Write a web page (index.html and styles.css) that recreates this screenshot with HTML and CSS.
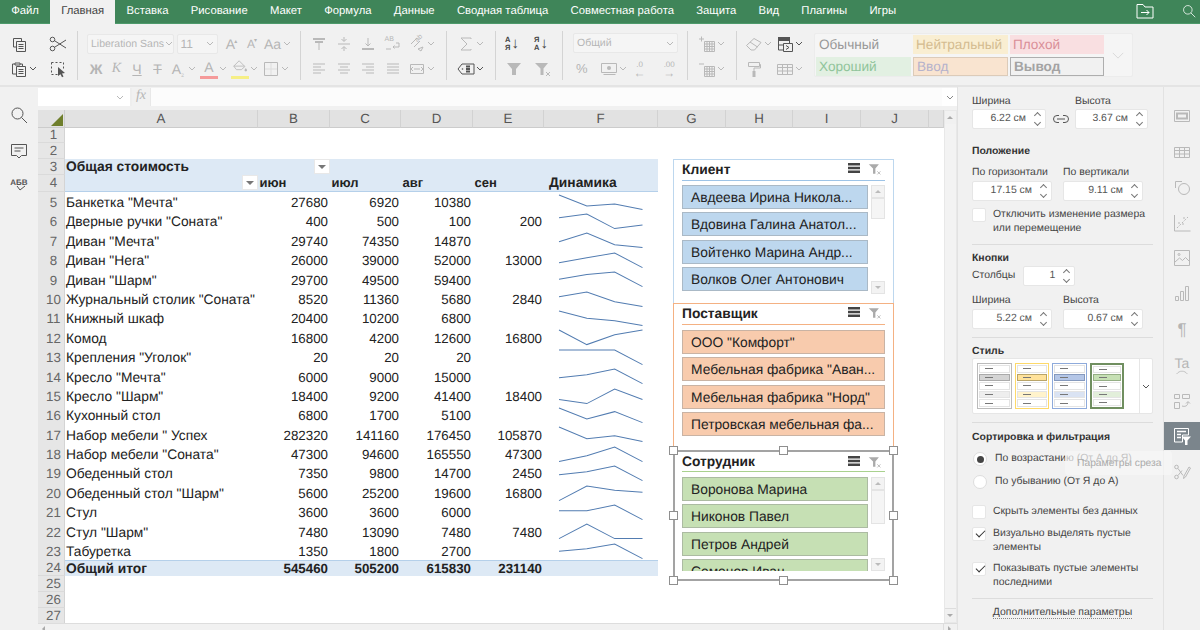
FILE: index.html
```html
<!DOCTYPE html>
<html lang="ru">

<head>
    <meta charset="UTF-8">
    <title>Таблица</title>
    <link rel="stylesheet" href="styles.css">
</head>

<body>
    <svg class="sprite" xmlns="http://www.w3.org/2000/svg">
        <symbol id="i-copy" viewBox="0 0 18 18"><path d="M6 12H3.500V3.500h8V6"/><path d="M6.500 6.500h9v10h-9z"/><path d="M8.500 9.500h5M8.500 11.500h5M8.500 13.500h5"/></symbol>
        <symbol id="i-paste" viewBox="0 0 18 18"><path d="M6 14H2.500V4H5M10 4h2.500v2"/><path d="M5 5V3h5v2z"/><path d="M6.500 6.500h9v10h-9z"/><path d="M8.500 9.500h5M8.500 11.500h5M8.500 13.500h5"/></symbol>
        <symbol id="i-cut" viewBox="0 0 18 18"><circle cx="3.500" cy="4.500" r="2.300"/><circle cx="3.500" cy="13.500" r="2.300"/><path d="M5.500 5.700 17 13M5.500 12.300 17 5"/></symbol>
        <symbol id="i-select" viewBox="0 0 18 18"><path stroke-dasharray="2 2" d="M2.500 2.500h12v8M2.500 2.500v12h6"/><path class="solid" d="M9 7l7 6-3 .5 1.500 3-1.500.8-1.500-3L9 16z"/></symbol>
        <symbol id="i-atop" viewBox="0 0 18 18"><path stroke-width="2" d="M3 4h12"/><path stroke-width="2" d="M5 7h8"/><path d="M9 7v8"/></symbol>
        <symbol id="i-amid" viewBox="0 0 18 18"><path d="M3 9h12"/><path d="M9 2v4M6.500 4 9 6.500 11.500 4M9 16v-4M6.500 14 9 11.500 11.500 14"/></symbol>
        <symbol id="i-abot" viewBox="0 0 18 18"><path stroke-width="2" d="M3 14h12"/><path d="M9 3v8M6.500 8.500 9 11l2.500-2.500"/></symbol>
        <symbol id="i-left" viewBox="0 0 18 18"><path d="M3 4h12M3 7h8M3 10h12M3 13h8"/></symbol>
        <symbol id="i-center" viewBox="0 0 18 18"><path d="M3 4h12M5 7h8M3 10h12M5 13h8"/></symbol>
        <symbol id="i-right" viewBox="0 0 18 18"><path d="M3 4h12M7 7h8M3 10h12M7 13h8"/></symbol>
        <symbol id="i-just" viewBox="0 0 18 18"><path d="M3 4h12M3 7h12M3 10h12M3 13h12"/></symbol>
        <symbol id="i-wrap" viewBox="0 0 18 18"><path d="M9 12h6V8h-3M10.500 10.500 9 12l1.500 1.500M2 14h5"/></symbol>
        <symbol id="i-angle" viewBox="0 0 18 18"><path d="M3 9l6-6M6 12l6-6M10 14l5-2-2 4z"/></symbol>
        <symbol id="i-merge" viewBox="0 0 18 18"><path d="M2.500 4.500h13v9h-13z"/><path d="M6 9h6M5 7l-2 2 2 2M13 7l2 2-2 2"/></symbol>
        <symbol id="i-sigma" viewBox="0 0 18 18"><path d="M14 4V3H4l6 6-6 6h10v-1"/></symbol>
        <symbol id="i-tag" viewBox="0 0 18 18"><path d="M5 4h12v10H5L1 9z"/><path stroke-width="2" d="M9 6.500h4M9 9h4M9 11.500h4"/><circle class="solid" cx="5.500" cy="9" r=".8"/></symbol>
        <symbol id="i-filter" viewBox="0 0 18 18"><path class="solid" d="M2 3h14l-5 6v6H7V9z"/></symbol>
        <symbol id="i-filterx" viewBox="0 0 18 18"><path class="solid" d="M1 3h13L9.500 8.500V15h-3V8.500z"/><path d="M12 12l4 4M16 12l-4 4"/></symbol>
        <symbol id="i-money" viewBox="0 0 18 18"><path d="M1.500 3.500h15v9h-15zM3.500 14.500h12"/><circle class="solid" cx="9" cy="8" r="2"/></symbol>
        <symbol id="i-insert" viewBox="0 0 18 18"><path d="M6.500 6.500h10v10h-10zM6.500 11.500h10M11.500 6.500v10M6.500 9h10M6.500 14h10M9 6.500v10M14 6.500v10"/><path d="M1 4h5M3.500 1.500v5"/></symbol>
        <symbol id="i-delete" viewBox="0 0 18 18"><path d="M6.500 6.500h10v10h-10zM6.500 11.500h10M11.500 6.500v10M6.500 9h10M6.500 14h10M9 6.500v10M14 6.500v10"/><path d="M1 4h5"/></symbol>
        <symbol id="i-eraser" viewBox="0 0 18 18"><path d="M1.500 10.500 9 3.500l7 4-6.500 7.500H6z"/><path d="M5 7l7.500 5"/></symbol>
        <symbol id="i-tablefmt" viewBox="0 0 18 18"><path class="solid" d="M2 2h12v4H2z"/><path d="M2.500 6v9H7M13.500 6v2M2.500 10H7"/><path d="M7.500 8.500h9v8h-9z"/><path d="M10 10.500l3 2-3 2"/></symbol>
        <symbol id="i-brush" viewBox="0 0 18 18"><path d="M3.500 2.500h11v4h-11z"/><path d="M14.500 4.500h1v3.500H9v3"/><path stroke-width="3" d="M9 11v6"/></symbol>
        <symbol id="i-table" viewBox="0 0 18 18"><path d="M1.500 4.500h15v10h-15zM1.500 7.500h15M1.500 11h15M6.500 4.500v10M11.500 4.500v10"/></symbol>
        <symbol id="i-border" viewBox="0 0 18 18"><path d="M2.500 2.500h13v13h-13z"/><path stroke="#ddd" d="M9 3v12M3 9h12"/></symbol>
        <symbol id="i-bucket" viewBox="0 0 18 18"><path d="M2 8l6-6 6.500 6.500-4 3.500H5z"/><path d="M2 8h12"/><path class="solid" d="M15.500 10l1.500 2.500a1.500 1.500 0 0 1-3 0z"/></symbol>
        <symbol id="i-search" viewBox="0 0 18 18"><circle cx="7.500" cy="7.500" r="5.500"/><path d="M11.500 11.500 17 17"/></symbol>
        <symbol id="i-folder" viewBox="0 0 18 18"><path d="M1 16V2.500h6L9 5h8v11z"/><path d="M5 10.500h8M10.500 8l2.500 2.500-2.500 2.500"/></symbol>
        <symbol id="i-comment" viewBox="0 0 18 18"><path d="M1.500 2.500h15v11h-5L9 16l-2.500-2.500h-5z"/><path d="M4.500 6h9M4.500 9h6"/></symbol>
        <symbol id="i-stack" viewBox="0 0 12 12"><path class="solid stack" d="M0 0h12v2.500H0zM0 3.800h12v2.500H0zM0 7.600h12v2.500H0z"/></symbol>
        <symbol id="i-link" viewBox="0 0 18 18"><path d="M7 5.500H5a3.500 3.500 0 0 0 0 7h2M11 5.500h2a3.500 3.500 0 0 1 0 7h-2M5 9h8"/></symbol>
        <symbol id="i-slide" viewBox="0 0 18 18"><path d="M1.500 3.500h15v11h-15z"/><path stroke-width="2" d="M4 6.500h10v5H4z"/></symbol>
        <symbol id="i-shapes" viewBox="0 0 18 18"><path d="M9 3.500H2.500V10"/><circle cx="11" cy="11" r="5.500"/></symbol>
        <symbol id="i-chart" viewBox="0 0 18 18"><path d="M1.500 1v16h16"/><path stroke-dasharray="2 1.500" d="M4 14 15 3"/><path d="M5 9h2M9 10h2M10 4h2"/></symbol>
        <symbol id="i-image" viewBox="0 0 18 18"><path d="M1.500 1.500h15v15h-15z"/><path d="M2 13l4.500-4 3 2.500 3-3 3.500 3.500"/><circle cx="6" cy="5.500" r="1"/></symbol>
        <symbol id="i-bars" viewBox="0 0 18 18"><path d="M2.500 11.500h3v4h-3zM7.500 6.500h3v9h-3zM12.500 1.500h3v14h-3z"/></symbol>
        <symbol id="i-arc" viewBox="0 0 18 6"><path d="M2 5c4-5 10-5 14 0"/></symbol>
        <symbol id="i-layout" viewBox="0 0 18 18"><path d="M1.500 2.500h5v4h-5zM9.500 2.500h7v4h-7zM1.500 10.500h5v6h-5z"/><path d="M9 14c3 1 6 0 6-4M13 11.500l2-2 2 2"/></symbol>
        <symbol id="i-slicer" viewBox="0 0 18 18"><path d="M1.500 1.500h14V8H9.500v7h-8z"/><path stroke-width="1.500" d="M4 4.500h9M4 7.500h4M4 10.500h4"/><path class="solid" d="M8.500 9.500h9.500l-3.500 4v4.500h-2.500v-4.500z"/></symbol>
        <symbol id="i-sign" viewBox="0 0 18 18"><circle cx="3.500" cy="4" r="1.800"/><circle cx="3.500" cy="14" r="1.800"/><path d="M5 5.500l5 7M5 12.500l4-5M11 13l5-9 1.500 1-5 9-2 1.500z"/></symbol>
    </svg>

    <div class="app">
        <nav class="tabs">
            <span class="tab">Файл</span>
            <span class="tab active">Главная</span>
            <span class="tab">Вставка</span>
            <span class="tab">Рисование</span>
            <span class="tab">Макет</span>
            <span class="tab">Формула</span>
            <span class="tab">Данные</span>
            <span class="tab">Сводная таблица</span>
            <span class="tab">Совместная работа</span>
            <span class="tab">Защита</span>
            <span class="tab">Вид</span>
            <span class="tab">Плагины</span>
            <span class="tab">Игры</span>
            <span class="tab-icons">
                <svg class="ic"><use href="#i-folder" /></svg>
                <svg class="ic lens"><use href="#i-search" /></svg>
            </span>
        </nav>

        <div class="ribbon">
            <div class="group g-clip">
                <svg class="ic on"><use href="#i-copy" /></svg>
                <svg class="ic on"><use href="#i-cut" /></svg>
                <span class="tool"><svg class="ic on"><use href="#i-paste" /></svg><svg class="chev on"><path d="M1 1l3 3 3-3" /></svg></span>
                <svg class="ic on"><use href="#i-select" /></svg>
            </div>

            <div class="group g-font">
                <div class="tool-row">
                    <span class="combo combo-font">Liberation Sans<svg class="chev"><path d="M1 1l3 3 3-3" /></svg></span>
                    <span class="combo combo-size">11<svg class="chev"><path d="M1 1l3 3 3-3" /></svg></span>
                    <span class="glyph">A<sup>▴</sup></span>
                    <span class="glyph small">A<sup>▾</sup></span>
                    <span class="tool"><span class="glyph">Aa</span><svg class="chev"><path d="M1 1l3 3 3-3" /></svg></span>
                </div>
                <div class="tool-row">
                    <span class="glyph strong">Ж</span>
                    <span class="glyph serifi">К</span>
                    <span class="glyph under">Ч</span>
                    <span class="glyph strike">Т</span>
                    <span class="tool split"><span class="glyph">A<sub>₂</sub></span><svg class="chev"><path d="M1 1l3 3 3-3" /></svg></span>
                    <span class="tool split"><span class="glyph colored red">A</span><svg class="chev"><path d="M1 1l3 3 3-3" /></svg></span>
                    <span class="tool split"><span class="colored yellow"><svg class="ic"><use href="#i-bucket" /></svg></span><svg class="chev"><path d="M1 1l3 3 3-3" /></svg></span>
                    <span class="tool"><svg class="ic"><use href="#i-border" /></svg><svg class="chev"><path d="M1 1l3 3 3-3" /></svg></span>
                </div>
            </div>

            <div class="group g-align">
                <div class="tool-row">
                    <svg class="ic"><use href="#i-atop" /></svg>
                    <svg class="ic"><use href="#i-amid" /></svg>
                    <svg class="ic"><use href="#i-abot" /></svg>
                    <span class="stacked"><small>AB</small><svg class="ic"><use href="#i-wrap" /></svg></span>
                    <span class="tool"><span class="stacked"><small class="tilt">ab</small><svg class="ic"><use href="#i-angle" /></svg></span><svg class="chev"><path d="M1 1l3 3 3-3" /></svg></span>
                </div>
                <div class="tool-row">
                    <svg class="ic"><use href="#i-left" /></svg>
                    <svg class="ic"><use href="#i-center" /></svg>
                    <svg class="ic"><use href="#i-right" /></svg>
                    <svg class="ic"><use href="#i-just" /></svg>
                    <span class="tool"><svg class="ic"><use href="#i-merge" /></svg><svg class="chev"><path d="M1 1l3 3 3-3" /></svg></span>
                </div>
            </div>

            <div class="group g-sum">
                <span class="tool"><svg class="ic"><use href="#i-sigma" /></svg><svg class="chev"><path d="M1 1l3 3 3-3" /></svg></span>
                <span class="tool"><svg class="ic on"><use href="#i-tag" /></svg><svg class="chev on"><path d="M1 1l3 3 3-3" /></svg></span>
            </div>

            <div class="group g-sort">
                <span class="sort"><b>А<br>Я</b><i>↓</i></span>
                <span class="sort"><b>Я<br>А</b><i>↓</i></span>
                <svg class="ic"><use href="#i-filter" /></svg>
                <svg class="ic"><use href="#i-filterx" /></svg>
            </div>

            <div class="group g-num">
                <span class="combo combo-num">Общий<svg class="chev"><path d="M1 1l3 3 3-3" /></svg></span>
                <div class="tool-row">
                    <span class="glyph percent">%</span>
                    <span class="tool"><svg class="ic"><use href="#i-money" /></svg><svg class="chev"><path d="M1 1l3 3 3-3" /></svg></span>
                    <span class="decimals"><small>.0</small><i>←</i></span>
                    <span class="decimals"><small>.00</small><i>→</i></span>
                </div>
            </div>

            <div class="group g-cells">
                <span class="tool"><svg class="ic"><use href="#i-insert" /></svg><svg class="chev"><path d="M1 1l3 3 3-3" /></svg></span>
                <span class="tool"><svg class="ic"><use href="#i-delete" /></svg><svg class="chev"><path d="M1 1l3 3 3-3" /></svg></span>
            </div>

            <div class="group g-format">
                <span class="tool"><svg class="ic"><use href="#i-eraser" /></svg><svg class="chev"><path d="M1 1l3 3 3-3" /></svg></span>
                <span class="tool"><svg class="ic on"><use href="#i-tablefmt" /></svg><svg class="chev on"><path d="M1 1l3 3 3-3" /></svg></span>
                <svg class="ic"><use href="#i-brush" /></svg>
                <span class="tool"><svg class="ic"><use href="#i-table" /></svg><svg class="chev"><path d="M1 1l3 3 3-3" /></svg></span>
            </div>

            <div class="gallery">
                <div class="gallery-grid">
                    <span class="cs cs-normal">Обычный</span>
                    <span class="cs cs-neutral">Нейтральный</span>
                    <span class="cs cs-bad">Плохой</span>
                    <span class="cs cs-good">Хороший</span>
                    <span class="cs cs-input">Ввод</span>
                    <span class="cs cs-output">Вывод</span>
                </div>
                <div class="gallery-more"><svg class="chev big" viewBox="0 0 8 5"><path d="M1 1l3 3 3-3" /></svg></div>
            </div>
        </div>

        <div class="main">
            <aside class="sidebar">
                <svg class="ic on"><use href="#i-search" /></svg>
                <svg class="ic on"><use href="#i-comment" /></svg>
                <span class="spell">АБВ<svg viewBox="0 0 10 6"><path d="M1 1l3 4 5-4" /></svg></span>
            </aside>

            <section class="center">
                <div class="formula">
                    <div class="name-box"><svg class="chev"><path d="M1 1l3 3 3-3" /></svg></div>
                    <div class="fx">fx</div>
                    <div class="formula-input"></div>
                    <div class="formula-more"><svg class="chev"><path d="M1 1l3 3 3-3" /></svg></div>
                </div>

                <div class="sheet-wrap">
                    <div class="sheet">
                        <div class="row head">
                            <div class="corner"></div>
                            <div class="ch">A</div><div class="ch">B</div><div class="ch">C</div><div class="ch">D</div><div class="ch">E</div><div class="ch">F</div><div class="ch">G</div><div class="ch">H</div><div class="ch">I</div><div class="ch">J</div><div class="ch"></div>
                        </div>
                        <div class="row low"><div class="rh">1</div></div>
                        <div class="row low"><div class="rh">2</div></div>
                        <div class="row low band">
                            <div class="rh">3</div>
                            <div class="c b">Общая стоимость</div>
                            <div class="c end"><span class="fbtn"></span></div>
                            <div class="c"></div><div class="c"></div><div class="c"></div><div class="c"></div>
                        </div>
                        <div class="row sub band">
                            <div class="rh">4</div>
                            <div class="c end"><span class="fbtn"></span></div>
                            <div class="c b m">июн</div><div class="c b m">июл</div><div class="c b m">авг</div><div class="c b m">сен</div><div class="c b dyn">Динамика</div>
                        </div>
                        <div class="row"><div class="rh">5</div><div class="c">Банкетка "Мечта"</div><div class="c n">27680</div><div class="c n">6920</div><div class="c n">10380</div><div class="c n"></div><div class="c"><svg class="spark" viewBox="0 0 3 1" preserveAspectRatio="none"><polyline points="0,0 1,.75 2,.625 3,1" /></svg></div></div>
                        <div class="row"><div class="rh">6</div><div class="c">Дверные ручки "Соната"</div><div class="c n">400</div><div class="c n">500</div><div class="c n">100</div><div class="c n">200</div><div class="c"><svg class="spark" viewBox="0 0 3 1" preserveAspectRatio="none"><polyline points="0,.25 1,0 2,1 3,.75" /></svg></div></div>
                        <div class="row"><div class="rh">7</div><div class="c">Диван "Мечта"</div><div class="c n">29740</div><div class="c n">74350</div><div class="c n">14870</div><div class="c n"></div><div class="c"><svg class="spark" viewBox="0 0 3 1" preserveAspectRatio="none"><polyline points="0,.6 1,0 2,.8 3,1" /></svg></div></div>
                        <div class="row"><div class="rh">8</div><div class="c">Диван "Нега"</div><div class="c n">26000</div><div class="c n">39000</div><div class="c n">52000</div><div class="c n">13000</div><div class="c"><svg class="spark" viewBox="0 0 3 1" preserveAspectRatio="none"><polyline points="0,.667 1,.333 2,0 3,1" /></svg></div></div>
                        <div class="row"><div class="rh">9</div><div class="c">Диван "Шарм"</div><div class="c n">29700</div><div class="c n">49500</div><div class="c n">59400</div><div class="c n"></div><div class="c"><svg class="spark" viewBox="0 0 3 1" preserveAspectRatio="none"><polyline points="0,.5 1,.167 2,0 3,1" /></svg></div></div>
                        <div class="row"><div class="rh">10</div><div class="c">Журнальный столик "Соната"</div><div class="c n">8520</div><div class="c n">11360</div><div class="c n">5680</div><div class="c n">2840</div><div class="c"><svg class="spark" viewBox="0 0 3 1" preserveAspectRatio="none"><polyline points="0,.333 1,0 2,.667 3,1" /></svg></div></div>
                        <div class="row"><div class="rh">11</div><div class="c">Книжный шкаф</div><div class="c n">20400</div><div class="c n">10200</div><div class="c n">6800</div><div class="c n"></div><div class="c"><svg class="spark" viewBox="0 0 3 1" preserveAspectRatio="none"><polyline points="0,0 1,.5 2,.667 3,1" /></svg></div></div>
                        <div class="row"><div class="rh">12</div><div class="c">Комод</div><div class="c n">16800</div><div class="c n">4200</div><div class="c n">12600</div><div class="c n">16800</div><div class="c"><svg class="spark" viewBox="0 0 3 1" preserveAspectRatio="none"><polyline points="0,0 1,1 2,.333 3,0" /></svg></div></div>
                        <div class="row"><div class="rh">13</div><div class="c">Крепления "Уголок"</div><div class="c n">20</div><div class="c n">20</div><div class="c n">20</div><div class="c n"></div><div class="c"><svg class="spark" viewBox="0 0 3 1" preserveAspectRatio="none"><polyline points="0,0 1,0 2,0 3,1" /></svg></div></div>
                        <div class="row"><div class="rh">14</div><div class="c">Кресло "Мечта"</div><div class="c n">6000</div><div class="c n">9000</div><div class="c n">15000</div><div class="c n"></div><div class="c"><svg class="spark" viewBox="0 0 3 1" preserveAspectRatio="none"><polyline points="0,.6 1,.4 2,0 3,1" /></svg></div></div>
                        <div class="row"><div class="rh">15</div><div class="c">Кресло "Шарм"</div><div class="c n">18400</div><div class="c n">9200</div><div class="c n">41400</div><div class="c n">18400</div><div class="c"><svg class="spark" viewBox="0 0 3 1" preserveAspectRatio="none"><polyline points="0,.714 1,1 2,0 3,.714" /></svg></div></div>
                        <div class="row"><div class="rh">16</div><div class="c">Кухонный стол</div><div class="c n">6800</div><div class="c n">1700</div><div class="c n">5100</div><div class="c n"></div><div class="c"><svg class="spark" viewBox="0 0 3 1" preserveAspectRatio="none"><polyline points="0,0 1,.75 2,.25 3,1" /></svg></div></div>
                        <div class="row"><div class="rh">17</div><div class="c">Набор мебели " Успех</div><div class="c n">282320</div><div class="c n">141160</div><div class="c n">176450</div><div class="c n">105870</div><div class="c"><svg class="spark" viewBox="0 0 3 1" preserveAspectRatio="none"><polyline points="0,0 1,.8 2,.6 3,1" /></svg></div></div>
                        <div class="row"><div class="rh">18</div><div class="c">Набор мебели "Соната"</div><div class="c n">47300</div><div class="c n">94600</div><div class="c n">165550</div><div class="c n">47300</div><div class="c"><svg class="spark" viewBox="0 0 3 1" preserveAspectRatio="none"><polyline points="0,1 1,.6 2,0 3,1" /></svg></div></div>
                        <div class="row"><div class="rh">19</div><div class="c">Обеденный стол</div><div class="c n">7350</div><div class="c n">9800</div><div class="c n">14700</div><div class="c n">2450</div><div class="c"><svg class="spark" viewBox="0 0 3 1" preserveAspectRatio="none"><polyline points="0,.6 1,.4 2,0 3,1" /></svg></div></div>
                        <div class="row"><div class="rh">20</div><div class="c">Обеденный стол "Шарм"</div><div class="c n">5600</div><div class="c n">25200</div><div class="c n">19600</div><div class="c n">16800</div><div class="c"><svg class="spark" viewBox="0 0 3 1" preserveAspectRatio="none"><polyline points="0,1 1,0 2,.286 3,.429" /></svg></div></div>
                        <div class="row"><div class="rh">21</div><div class="c">Стул</div><div class="c n">3600</div><div class="c n">3600</div><div class="c n">6000</div><div class="c n"></div><div class="c"><svg class="spark" viewBox="0 0 3 1" preserveAspectRatio="none"><polyline points="0,.4 1,.4 2,0 3,1" /></svg></div></div>
                        <div class="row"><div class="rh">22</div><div class="c">Стул "Шарм"</div><div class="c n">7480</div><div class="c n">13090</div><div class="c n">7480</div><div class="c n">7480</div><div class="c"><svg class="spark" viewBox="0 0 3 1" preserveAspectRatio="none"><polyline points="0,1 1,0 2,1 3,1" /></svg></div></div>
                        <div class="row"><div class="rh">23</div><div class="c">Табуретка</div><div class="c n">1350</div><div class="c n">1800</div><div class="c n">2700</div><div class="c n"></div><div class="c"><svg class="spark" viewBox="0 0 3 1" preserveAspectRatio="none"><polyline points="0,.5 1,.333 2,0 3,1" /></svg></div></div>
                        <div class="row low total band">
                            <div class="rh">24</div>
                            <div class="c b">Общий итог</div>
                            <div class="c b n">545460</div><div class="c b n">505200</div><div class="c b n">615830</div><div class="c b n">231140</div><div class="c"></div>
                        </div>
                        <div class="row low"><div class="rh">25</div></div>
                        <div class="row low"><div class="rh">26</div></div>
                        <div class="row low"><div class="rh">27</div></div>

                        <div class="slicer blue">
                            <div class="slicer-title"><span>Клиент</span><svg class="stack-ic"><use href="#i-stack" /></svg><svg class="ic clear"><use href="#i-filterx" /></svg></div>
                            <div class="slicer-body">
                                <div class="slicer-items">
                                    <div class="item">Авдеева Ирина Никола...</div>
                                    <div class="item">Вдовина Галина Анатол...</div>
                                    <div class="item">Войтенко Марина Андр...</div>
                                    <div class="item">Волков Олег Антонович</div>
                                </div>
                                <div class="slicer-scroll">
                                    <span class="sbtn"></span><span class="sthumb"></span><span class="sbtn last"></span>
                                </div>
                            </div>
                        </div>

                        <div class="slicer orange">
                            <div class="slicer-title"><span>Поставщик</span><svg class="stack-ic"><use href="#i-stack" /></svg><svg class="ic clear"><use href="#i-filterx" /></svg></div>
                            <div class="slicer-body">
                                <div class="slicer-items">
                                    <div class="item">ООО "Комфорт"</div>
                                    <div class="item">Мебельная фабрика "Аван...</div>
                                    <div class="item">Мебельная фабрика "Норд"</div>
                                    <div class="item">Петровская мебельная фа...</div>
                                </div>
                            </div>
                        </div>

                        <div class="slicer green">
                            <div class="slicer-title"><span>Сотрудник</span><svg class="stack-ic"><use href="#i-stack" /></svg><svg class="ic clear"><use href="#i-filterx" /></svg></div>
                            <div class="slicer-body">
                                <div class="slicer-items">
                                    <div class="item">Воронова Марина</div>
                                    <div class="item">Никонов Павел</div>
                                    <div class="item">Петров Андрей</div>
                                    <div class="item">Семенов Иван</div>
                                </div>
                                <div class="slicer-scroll">
                                    <span class="sbtn"></span><span class="sthumb"></span><span class="sbtn last"></span>
                                </div>
                            </div>
                            <span class="handle tl"></span><span class="handle tm"></span><span class="handle tr"></span>
                            <span class="handle ml"></span><span class="handle mr"></span>
                            <span class="handle bl"></span><span class="handle bm"></span><span class="handle br"></span>
                        </div>
                    </div>

                    <div class="vscroll">
                        <span class="vbtn up"></span>
                        <span class="vthumb"></span>
                        <span class="vbtn down"></span>
                    </div>
                </div>

                <div class="hscroll">
                    <span class="hbtn left"></span>
                    <span class="hthumb"></span>
                    <span class="hbtn right"></span>
                </div>
            </section>

            <aside class="panel">
                <div class="fields size-row">
                    <label class="field f-w">Ширина<span class="spin">6.22 см<span class="arrows"></span></span></label>
                    <svg class="ic on link"><use href="#i-link" /></svg>
                    <label class="field f-h">Высота<span class="spin">3.67 см<span class="arrows"></span></span></label>
                </div>

                <h4 class="mt-16">Положение</h4>
                <div class="fields pos-row mt-7">
                    <label class="field f-pos">По горизонтали<span class="spin">17.15 см<span class="arrows"></span></span></label>
                    <label class="field f-pos">По вертикали<span class="spin">9.11 см<span class="arrows"></span></span></label>
                </div>
                <div class="check mt-7"><span class="box"></span><span>Отключить изменение размера<br>или перемещение</span></div>
                <hr class="mt-8">

                <h4 class="mt-7">Кнопки</h4>
                <div class="cols-row"><span>Столбцы</span><span class="spin spin-cols">1<span class="arrows"></span></span></div>
                <div class="fields pos-row mt-8">
                    <label class="field f-pos">Ширина<span class="spin">5.22 см<span class="arrows"></span></span></label>
                    <label class="field f-pos">Высота<span class="spin">0.67 см<span class="arrows"></span></span></label>
                </div>
                <hr class="mt-8">

                <h4 class="mt-7">Стиль</h4>
                <div class="styles">
                    <div class="style-list">
                        <div class="thumb t-grey"><i></i><i></i><i></i><i></i><i></i></div>
                        <div class="thumb t-yellow"><i></i><i></i><i></i><i></i><i></i></div>
                        <div class="thumb t-blue"><i></i><i></i><i></i><i></i><i></i></div>
                        <div class="thumb t-green"><i></i><i></i><i></i><i></i><i></i></div>
                    </div>
                    <div class="style-more"><svg class="chev on"><path d="M1 1l3 3 3-3" /></svg></div>
                </div>
                <hr class="mt-8">

                <h4 class="mt-8">Сортировка и фильтрация</h4>
                <div class="radio"><span class="dot on"></span>По возрастанию (От А до Я)</div>
                <div class="radio"><span class="dot"></span>По убыванию (От Я до А)</div>
                <div class="check single"><span class="box"></span><span>Скрыть элементы без данных</span></div>
                <div class="check mt-8"><span class="box ticked"></span><span>Визуально выделять пустые<br>элементы</span></div>
                <div class="check mt-7"><span class="box ticked"></span><span>Показывать пустые элементы<br>последними</span></div>
                <hr class="mt-8">
                <div class="more-link"><span>Дополнительные параметры</span></div>
            </aside>

            <aside class="rtabs">
                <span class="rtab"><svg class="ic"><use href="#i-slide" /></svg></span>
                <span class="rtab"><svg class="ic"><use href="#i-table" /></svg></span>
                <span class="rtab"><svg class="ic"><use href="#i-shapes" /></svg></span>
                <span class="rtab"><svg class="ic"><use href="#i-chart" /></svg></span>
                <span class="rtab"><svg class="ic"><use href="#i-image" /></svg></span>
                <span class="rtab"><svg class="ic"><use href="#i-bars" /></svg></span>
                <span class="rtab para">¶</span>
                <span class="rtab art">Ta<svg viewBox="0 0 18 6"><use href="#i-arc" /></svg></span>
                <span class="rtab"><svg class="ic"><use href="#i-layout" /></svg></span>
                <span class="rtab active"><svg class="ic"><use href="#i-slicer" /></svg></span>
                <span class="rtab"><svg class="ic"><use href="#i-sign" /></svg></span>
            </aside>

            <div class="tooltip">Параметры среза</div>
        </div>
    </div>
</body>

</html>
```

FILE: styles.css
```css
* {
    box-sizing: border-box;
}

body {
    margin: 0;
    font-family: "Liberation Sans", Arial, sans-serif;
    font-size: 11px;
    color: #444;
    background: #f1f1f1;
    text-rendering: geometricPrecision;
}

h4 {
    margin: 0;
}

hr {
    margin: 0;
}

.sprite {
    display: none;
}

.app {
    width: 1200px;
    height: 630px;
    overflow: hidden;
    display: flex;
    flex-direction: column;
}

/* icons */
.ic {
    width: 18px;
    height: 18px;
    flex: none;
    fill: none;
    stroke: currentColor;
    stroke-width: 1;
    color: #b9b9b9;
}

.ic.on {
    color: #555;
}

.solid {
    fill: currentColor;
    stroke: none;
}

.chev {
    width: 8px;
    height: 5px;
    flex: none;
    margin-left: 1px;
    fill: none;
    stroke: #b9b9b9;
}

.chev.on {
    stroke: #555;
}

/* top tabs */
.tabs {
    height: 24px;
    flex: none;
    display: flex;
    background: #3f8559;
    border-bottom: 1px solid #4d9a6b;
    color: #fff;
}

.tab {
    padding: 0 11.15px;
    font-size: 11.3px;
    line-height: 22px;
}

.tab.active {
    height: 24px;
    background: #f1f1f1;
    color: #444;
}

.tab-icons {
    margin-left: auto;
    display: flex;
    gap: 28px;
    padding: 2px 4px 0 0;
}

.tab-icons .ic {
    color: #fff;
}

.tab-icons .lens {
    width: 14px;
    height: 14px;
    margin-top: 2px;
}

/* ribbon */
.ribbon {
    height: 63px;
    flex: none;
    display: flex;
    padding-top: 7px;
    background: #f1f1f1;
    border-bottom: 2px solid #e4e4e4;
}

.group {
    height: 49px;
    flex: none;
    border-right: 1px solid #d4d4d4;
}

.tool {
    display: flex;
    align-items: center;
}

.tool-row {
    display: flex;
    align-items: center;
    height: 25px;
    gap: 2.5px;
}

.g-clip {
    width: 78px;
    padding-left: 10px;
    display: grid;
    grid-template-columns: 39px 29px;
    grid-template-rows: 25px 25px;
    align-items: center;
}

.g-font {
    width: 223px;
    padding-left: 9px;
}

.split {
    margin-right: 1.5px;
}

.combo {
    height: 20px;
    display: flex;
    align-items: center;
    justify-content: space-between;
    padding: 0 3px;
    background: #f5f5f5;
    border: 1px solid #e8e8e8;
    border-radius: 2px;
    color: #b5b5b5;
    font-size: 10.5px;
    white-space: nowrap;
}

.combo-font {
    width: 87px;
}

.combo-size {
    width: 41px;
    margin-right: 2.5px;
    font-size: 12px;
}

.combo-num {
    width: 105px;
    margin-top: 2px;
}

.glyph {
    width: 18px;
    text-align: center;
    color: #b5b5b5;
    font-size: 14px;
    line-height: 18px;
    white-space: nowrap;
}

.glyph sup {
    font-size: 6px;
    vertical-align: 6px;
    line-height: 0;
    margin-left: -1px;
}

.glyph sub {
    font-size: 8px;
    vertical-align: -2px;
    line-height: 0;
}

.glyph.small {
    font-size: 12px;
}

.glyph.strong {
    font-weight: bold;
}

.glyph.serifi {
    font-family: "Liberation Serif", serif;
    font-style: italic;
}

.glyph.under {
    text-decoration: underline;
}

.glyph.strike {
    text-decoration: line-through;
}

.colored {
    width: 18px;
    height: 20px;
    display: block;
    border-bottom: 3px solid;
    line-height: 17px;
}

.colored .ic {
    display: block;
    height: 16px;
}

.red {
    border-color: #f59a9a;
}

.yellow {
    border-color: #f6ef86;
}

.g-align {
    width: 146px;
    padding-left: 9px;
}

.g-align .tool-row {
    gap: 6.5px;
}

.stacked {
    position: relative;
    width: 18px;
    height: 18px;
    color: #b5b5b5;
}

.stacked small {
    position: absolute;
    top: 0;
    left: 1px;
    font-size: 7px;
    line-height: 9px;
}

.stacked .tilt {
    top: -1px;
    left: 7px;
    transform: rotate(-45deg);
}

.stacked .ic {
    position: absolute;
    top: 0;
    left: 0;
}

.g-sum {
    width: 49px;
    padding-left: 10px;
    display: grid;
    grid-template-rows: 25px 25px;
    align-items: center;
}

.g-sort {
    width: 67px;
    padding-left: 9px;
    display: grid;
    grid-template-columns: 29px 18px;
    grid-template-rows: 25px 25px;
    align-items: center;
}

.sort {
    display: flex;
    align-items: center;
    color: #444;
}

.sort b {
    font-size: 7.5px;
    line-height: 7.5px;
}

.sort i {
    font-style: normal;
    font-size: 15px;
    margin-left: 1px;
}

.g-num {
    width: 125px;
    padding-left: 10px;
}

.g-num .tool-row {
    gap: 0;
    margin-top: 3px;
}

.percent {
    font-size: 13px;
    margin-right: 9px;
}

.g-num .tool {
    margin-right: 1px;
}

.decimals {
    width: 24px;
    margin-right: 6px;
    display: flex;
    flex-direction: column;
    align-items: center;
    color: #b5b5b5;
    line-height: 8px;
}

.decimals small {
    font-size: 8px;
}

.decimals i {
    font-style: normal;
    font-size: 12px;
}

.g-cells {
    width: 49px;
    padding-left: 10px;
    display: grid;
    grid-template-rows: 25px 25px;
    align-items: center;
}

.g-format {
    width: 66px;
    padding-left: 8px;
    border-right: 0;
    display: grid;
    grid-template-columns: 31px 27px;
    grid-template-rows: 25px 25px;
    align-items: center;
}

.gallery {
    width: 319px;
    height: 44px;
    margin: 2px 0 0 11px;
    padding: 1px;
    display: flex;
    background: #f5f5f5;
    border: 1px solid #ececec;
    border-radius: 2px;
}

.gallery-grid {
    display: grid;
    grid-template-columns: 95px 95px 94px;
    grid-template-rows: 19px 19px;
    gap: 3px 2px;
}

.cs {
    padding: 0 3px;
    font-size: 13.6px;
    line-height: 19px;
    white-space: nowrap;
}

.cs-normal {
    color: #989898;
}

.cs-neutral {
    background: #f9eed2;
    color: #d4bc90;
}

.cs-bad {
    background: #f9dfe1;
    color: #d98f98;
}

.cs-good {
    background: #e2f0e2;
    color: #90c49a;
}

.cs-input {
    background: #f9e4d0;
    border: 1px solid #dccbb9;
    color: #b5b2cc;
    line-height: 17px;
}

.cs-output {
    background: #f1f1f1;
    border: 1px solid #aeaeae;
    color: #a3a3a3;
    font-weight: bold;
    line-height: 17px;
}

.gallery-more {
    flex: 1;
    display: flex;
    align-items: center;
    justify-content: center;
}

.chev.big {
    width: 14px;
    height: 9px;
    stroke-width: .5;
    stroke: #d5d5d5;
}

/* main area */
.main {
    flex: 1;
    min-height: 0;
    position: relative;
    display: flex;
}

.sidebar {
    width: 38px;
    flex: none;
    padding-top: 19px;
    display: flex;
    flex-direction: column;
    align-items: center;
    gap: 18px;
}

.spell {
    width: 18px;
    color: #555;
    font-size: 8px;
    font-weight: bold;
    line-height: 9px;
    text-align: center;
}

.spell svg {
    display: block;
    width: 10px;
    height: 6px;
    margin: -2px 0 0 6px;
    fill: none;
    stroke: #555;
}

.center {
    width: 919px;
    flex: none;
    display: flex;
    flex-direction: column;
}

.formula {
    height: 18px;
    margin-top: 1px;
    flex: none;
    display: flex;
    background: #fff;
}

.name-box {
    width: 94px;
    display: flex;
    align-items: center;
    justify-content: flex-end;
    padding-right: 6px;
    border-right: 2px solid #eee;
}

.fx {
    width: 19px;
    background: #f1f1f1;
    border-right: 1px solid #e8e8e8;
    color: #b5b5b5;
    font-family: "Liberation Serif", serif;
    font-size: 14px;
    font-style: italic;
    line-height: 16px;
    text-align: center;
}

.formula-input {
    flex: 1;
    background: #fcfcfc;
}

.formula-more {
    width: 15px;
    display: flex;
    align-items: center;
    justify-content: center;
    background: #fff;
}

.formula-more .chev {
    stroke: #888;
    margin-left: 0;
}

.sheet-wrap {
    flex: 1;
    min-height: 0;
    margin-top: 4px;
    display: flex;
}

.sheet {
    position: relative;
    width: 906px;
    flex: none;
    font-size: 13.333px;
    color: #222;
    background: #fff;
}

.row {
    height: 19.4px;
    display: grid;
    grid-template-columns: 27px 193px 72px 71px 72px 71px 114px 68px 67px 68px 68px 15px;
}

.row.low {
    height: 16px;
}

.row.sub,
.row.head {
    height: 17px;
}

.rh {
    background: #e6e6e6;
    border-bottom: 1px solid #dadada;
    border-right: 1px solid #d4d4d4;
    color: #666;
    line-height: 21px;
    padding-left: 5px;
    text-align: center;
    overflow: hidden;
}

.low .rh,
.sub .rh {
    line-height: 16px;
}

.corner {
    background: #e2e2e2;
    border-right: 1px solid #ccc;
    border-bottom: 1px solid #ccc;
    position: relative;
}

.corner::after {
    content: "";
    position: absolute;
    right: 1px;
    bottom: 1px;
    border-style: solid;
    border-width: 0 0 12px 12px;
    border-color: transparent transparent #6f7f2c transparent;
}

.ch {
    background: #e2e2e2;
    border-right: 1px solid #d2d2d2;
    border-bottom: 1px solid #ccc;
    color: #555;
    text-align: center;
    line-height: 17px;
}

.c {
    min-width: 0;
    padding-left: 1px;
    font-size: 13.8px;
    white-space: nowrap;
    line-height: 22px;
}

.c.n {
    padding-right: 2px;
    font-size: 13.333px;
    text-align: right;
}

.c.b {
    font-weight: bold;
}

.c.m {
    padding-left: 1.5px;
    font-size: 13px;
}

.c.dyn {
    padding-left: 5px;
}

.band .c {
    background: #dde9f5;
    line-height: 16px;
}

.row.sub .c {
    border-bottom: 1px solid #b5d0ea;
}

.row.total .c {
    border-top: 1px solid #b5d0ea;
    line-height: 15px;
}

.c.end {
    display: flex;
    justify-content: flex-end;
    align-items: flex-start;
}

.fbtn {
    width: 16px;
    height: 15px;
    background: #fff;
    border: 1px solid #e8e8e8;
    position: relative;
}

.fbtn::after {
    content: "";
    position: absolute;
    left: 3px;
    top: 5px;
    border-style: solid;
    border-width: 4px 4px 0;
    border-color: #777 transparent transparent;
}

.spark {
    display: block;
    width: 83.5px;
    height: 14.6px;
    margin: 2.7px 0 0 14px;
    overflow: visible;
}

.spark polyline {
    fill: none;
    stroke: #527cb1;
    stroke-width: 1;
    vector-effect: non-scaling-stroke;
}

/* slicers sit on top of the sheet */
.slicer {
    position: absolute;
    left: 635px;
    width: 221px;
    padding: 0 8px;
    background: #fff;
    border: 1px solid #bdd7ee;
    color: #222;
    font-size: 13.8px;
}

.slicer.blue {
    top: 49px;
    height: 145px;
}

.slicer.orange {
    top: 193px;
    height: 160px;
    border-color: #f4b183;
}

.slicer.green {
    top: 340px;
    height: 131px;
    border: 2px solid #a3a3a3;
    padding: 0 7px;
}

.slicer-title {
    height: 21px;
    padding-bottom: 2px;
    display: flex;
    align-items: center;
    border-bottom: 1px solid #9dc3e6;
    font-weight: bold;
}

.orange .slicer-title {
    border-bottom-color: #f4b183;
}

.green .slicer-title {
    border-bottom-color: #a9d18e;
    height: 20px;
    padding-bottom: 0;
}

.slicer-title span {
    flex: 1;
}

.stack-ic {
    width: 12px;
    height: 12px;
    color: #444;
    margin-right: 8px;
}

.stack {
    fill: #444;
}

.ic.clear {
    width: 14px;
    height: 14px;
    margin-right: 3px;
    color: #aaa;
}

.slicer-body {
    display: flex;
    margin-top: 4px;
    gap: 3px;
}

.orange .slicer-body {
    margin-top: 5px;
}

.green .slicer-body {
    margin-top: 5px;
    height: 94px;
    overflow: hidden;
}

.slicer-items {
    flex: 1;
    min-width: 0;
}

.item {
    height: 24px;
    margin-bottom: 3.3px;
    padding-left: 8px;
    border: 1px solid #aab9c6;
    line-height: 23px;
    white-space: nowrap;
    overflow: hidden;
}

.blue .item {
    background: #bdd7ee;
}

.orange .item {
    background: #f8cbad;
    border-color: #c9b3a4;
}

.green .item {
    background: #c6e0b4;
    border-color: #acbba2;
}

.slicer-scroll {
    width: 14px;
    flex: none;
    display: flex;
    flex-direction: column;
}

.blue .slicer-scroll {
    height: 109px;
}

.green .slicer-scroll {
    height: 94px;
}

.sbtn {
    height: 13px;
    flex: none;
    position: relative;
    background: #f3f3f3;
    border: 1px solid #e4e4e4;
}

.sbtn::after {
    content: "";
    position: absolute;
    left: 3px;
    top: 4px;
    border-style: solid;
    border-width: 0 3px 3px;
    border-color: transparent transparent #bbb;
}

.sbtn.last {
    margin-top: auto;
}

.sbtn.last::after {
    border-width: 3px 3px 0;
    border-color: #bbb transparent transparent;
}

.sthumb {
    height: 21px;
    flex: none;
    background: #f5f5f5;
    border: 1px solid #e4e4e4;
}

.green .sthumb {
    height: 34px;
}

.handle {
    position: absolute;
    width: 9px;
    height: 9px;
    background: #fff;
    border: 1px solid #8f8f8f;
}

.tl, .ml, .bl {
    left: -6px;
}

.tm, .bm {
    left: 104px;
}

.tr, .mr, .br {
    right: -6px;
}

.tl, .tm, .tr {
    top: -6px;
}

.ml, .mr {
    top: 58.5px;
}

.bl, .bm, .br {
    bottom: -6px;
}

.vscroll {
    width: 13px;
    flex: none;
    display: flex;
    flex-direction: column;
    height: 513px;
    background: #e8e8e8;
    padding: 1px 0;
}

.vbtn {
    height: 13px;
    flex: none;
    margin: 0 1px;
    position: relative;
    background: #f1f1f1;
}

.vbtn::after {
    content: "";
    position: absolute;
    left: 2px;
    top: 5px;
    border-style: solid;
}

.vbtn.up::after {
    border-width: 0 3.5px 3px;
    border-color: transparent transparent #aaa;
}

.vbtn.down::after {
    border-width: 3px 3.5px 0;
    border-color: #aaa transparent transparent;
}

.vthumb {
    flex: 1;
    margin: 0 1px;
    background: #f3f3f3;
    border-bottom: 1px solid #ddd;
}

.hscroll {
    position: absolute;
    left: 38px;
    bottom: 0;
    width: 919px;
    height: 7px;
    display: flex;
    overflow: hidden;
    background: #e8e8e8;
    border-top: 1px solid #ddd;
}

.hbtn {
    width: 13px;
    flex: none;
    position: relative;
    background: #f1f1f1;
}

.hbtn::after {
    content: "";
    position: absolute;
    left: 4px;
    top: 2px;
    border-style: solid;
}

.hbtn.left::after {
    border-width: 3px 3px 3px 0;
    border-color: transparent #aaa transparent transparent;
}

.hbtn.right::after {
    border-width: 3px 0 3px 3px;
    border-color: transparent transparent transparent #aaa;
}

.hthumb {
    flex: 1;
    background: #f1f1f1;
    border-right: 1px solid #ddd;
}

/* right panel */
.panel {
    width: 207px;
    flex: none;
    padding: 8px 10px 0 14px;
    border-left: 1px solid #e2e2e2;
    border-right: 1px solid #e2e2e2;
    font-size: 10.45px;
    line-height: 14px;
    white-space: nowrap;
}

.panel h4 {
    font-size: 10.45px;
    line-height: 14px;
    color: #333;
}

.panel hr {
    height: 1px;
    border: 0;
    background: #dcdcdc;
}

.mt-7 {
    margin-top: 7px;
}

.mt-8 {
    margin-top: 8px;
}

.mt-16 {
    margin-top: 16px;
}

.fields {
    display: flex;
}

.size-row .f-w {
    width: 74px;
}

.size-row .f-h {
    width: 73px;
}

.link {
    margin: 15px 5px 0 6px;
}

.pos-row {
    gap: 11px;
}

.f-pos {
    width: 80px;
}

.field {
    display: block;
}

.spin {
    height: 20px;
    display: flex;
    align-items: center;
    justify-content: flex-end;
    padding-right: 19px;
    position: relative;
    background: #fff;
    border: 1px solid #e6e6e6;
    border-radius: 2px;
    color: #555;
}

.pos-row .spin {
    margin-top: 1px;
}

.arrows {
    position: absolute;
    right: 5px;
    top: 2px;
    width: 7px;
    height: 14px;
}

.arrows::before,
.arrows::after {
    content: "";
    position: absolute;
    left: 1.5px;
    width: 4px;
    height: 4px;
    border-left: 1px solid #777;
    transform: rotate(45deg);
}

.arrows::before {
    top: 1px;
    border-top: 1px solid #777;
}

.arrows::after {
    bottom: 1px;
    border-bottom: 1px solid #777;
    transform: rotate(-45deg);
}

.check {
    display: flex;
    gap: 7px;
}

.box {
    width: 14px;
    height: 14px;
    flex: none;
    position: relative;
    background: #fff;
    border: 1px solid #e6e6e6;
    border-radius: 2px;
}

.box.ticked::after {
    content: "";
    position: absolute;
    left: 3px;
    top: 2px;
    width: 8px;
    height: 4px;
    border-left: 1.5px solid #333;
    border-bottom: 1.5px solid #333;
    transform: rotate(-45deg);
}

.cols-row {
    display: flex;
    align-items: center;
    gap: 8px;
}

.spin-cols {
    width: 52px;
}

.styles {
    height: 56px;
    margin-top: -1px;
    display: flex;
    background: #fff;
    border: 1px solid #e6e6e6;
    border-radius: 2px;
}

.style-list {
    flex: 1;
    display: flex;
    gap: 3px;
    padding: 4px;
}

.style-more {
    width: 13px;
    display: flex;
    align-items: center;
    justify-content: center;
    border-left: 1px solid #e6e6e6;
}

.style-more .chev {
    margin-left: 0;
}

.thumb {
    width: 34.5px;
    height: 46px;
    padding: 1px;
    display: flex;
    flex-direction: column;
    gap: 1px;
    border: 1px solid #bbb;
}

.thumb i {
    flex: 1;
    display: flex;
    align-items: center;
    padding-left: 5px;
    border: 1px solid #e4e4e4;
}

.thumb i::after {
    content: "";
    width: 8px;
    height: 1px;
    background: #777;
}

.thumb i:nth-child(2) {
    background: #d4d4d4;
    border-color: #aaa;
}

.thumb i:nth-child(4) {
    background: #eee;
}

.t-yellow {
    border-color: #fdd96a;
}

.t-yellow i:nth-child(2) {
    background: #ffe29a;
    border-color: #b9a468;
}

.t-yellow i:nth-child(4) {
    background: #fff3cc;
}

.t-blue {
    border-color: #8eaadb;
}

.t-blue i:nth-child(2) {
    background: #b4c6e7;
    border-color: #8599bd;
}

.t-blue i:nth-child(4) {
    background: #dae3f3;
}

.t-green {
    border: 2px solid #708f60;
}

.t-green i:nth-child(2) {
    background: #c6e0b4;
    border-color: #94ae84;
}

.t-green i:nth-child(4) {
    background: #e2efda;
}

.radio {
    height: 18px;
    margin-top: 5px;
    display: flex;
    align-items: center;
    gap: 8px;
    padding-left: 1px;
}

.dot {
    width: 14px;
    height: 14px;
    flex: none;
    position: relative;
    background: #fff;
    border: 1px solid #ddd;
    border-radius: 50%;
}

.dot.on::after {
    content: "";
    position: absolute;
    left: 2.5px;
    top: 2.5px;
    width: 7px;
    height: 7px;
    border-radius: 50%;
    background: #444;
}

.check.single {
    margin-top: 14px;
}

.more-link {
    margin-top: 7px;
    text-align: center;
}

.more-link span {
    border-bottom: 1px dotted #888;
}

.rtabs {
    width: 36px;
    flex: none;
    padding-top: 15px;
    display: flex;
    flex-direction: column;
    gap: 7.6px;
}

.rtab {
    height: 28px;
    flex: none;
    display: flex;
    flex-direction: column;
    align-items: center;
    justify-content: center;
    color: #b5b5b5;
    line-height: 14px;
}

.rtab.active {
    background: #7b858c;
}

.rtab.active .ic {
    color: #fff;
}

.rtab.para {
    font-size: 17px;
}

.rtab.art {
    font-size: 14px;
}

.rtab.art svg {
    width: 14px;
    height: 5px;
    fill: none;
    stroke: currentColor;
}

.tooltip {
    position: absolute;
    left: 1065px;
    top: 364px;
    width: 107px;
    height: 24px;
    padding-left: 12px;
    background: rgba(246, 246, 246, .7);
    border-radius: 3px;
    color: #aaa;
    font-size: 10.3px;
    line-height: 25px;
}
```
